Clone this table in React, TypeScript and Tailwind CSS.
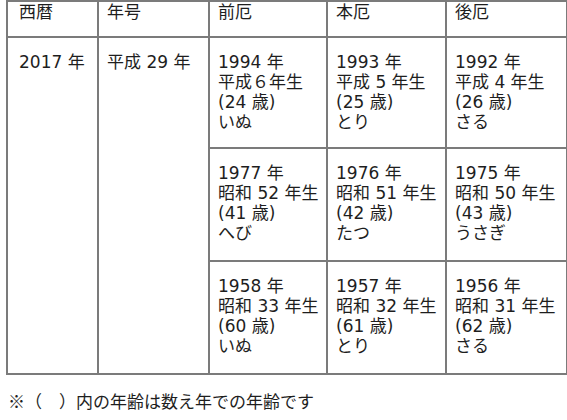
const rows = [
  [
    ['1994 年', '平成６年生', '(24 歳)', 'いぬ'],
    ['1993 年', '平成 5 年生', '(25 歳)', 'とり'],
    ['1992 年', '平成 4 年生', '(26 歳)', 'さる'],
  ],
  [
    ['1977 年', '昭和 52 年生', '(41 歳)', 'へび'],
    ['1976 年', '昭和 51 年生', '(42 歳)', 'たつ'],
    ['1975 年', '昭和 50 年生', '(43 歳)', 'うさぎ'],
  ],
  [
    ['1958 年', '昭和 33 年生', '(60 歳)', 'いぬ'],
    ['1957 年', '昭和 32 年生', '(61 歳)', 'とり'],
    ['1956 年', '昭和 31 年生', '(62 歳)', 'さる'],
  ],
]

const cell = 'border-2 border-[#7b7b7b] align-top text-left font-normal'

export default function App() {
  return (
    <div className="bg-white min-h-[420px] text-[#1e1e1e] text-[17px] leading-[20px]" style={{ fontFamily: '"DejaVu Sans", "Noto Sans CJK JP", sans-serif' }}>
      <table className="ml-[6px] w-[560px] border-collapse table-fixed">
        <colgroup>
          <col className="w-[91px]" />
          <col className="w-[111px]" />
          <col className="w-[118px]" />
          <col className="w-[119px]" />
          <col className="w-[121px]" />
        </colgroup>
        <thead>
          <tr className="h-[36px]">
            <th className={`${cell} pl-[11px] align-middle`}>西暦</th>
            <th className={`${cell} pl-[8px] align-middle`}>年号</th>
            <th className={`${cell} pl-[8px] align-middle`}>前厄</th>
            <th className={`${cell} pl-[8px] align-middle`}>本厄</th>
            <th className={`${cell} pl-[8px] align-middle`}>後厄</th>
          </tr>
        </thead>
        <tbody>
          {rows.map((row, i) => (
            <tr key={i} className={i === 0 ? 'h-[111px]' : 'h-[113px]'}>
              {i === 0 && (
                <>
                  <td rowSpan={3} className={`${cell} pl-[11px] pt-[14px]`}>2017 年</td>
                  <td rowSpan={3} className={`${cell} pl-[8px] pt-[14px]`}>平成 29 年</td>
                </>
              )}
              {row.map((lines, j) => (
                <td key={j} className={`${cell} pl-[8px] pt-[14px]`}>
                  {lines.map(l => <div key={l}>{l}</div>)}
                </td>
              ))}
            </tr>
          ))}
        </tbody>
      </table>
      <p className="mt-[16px] pl-[8px]" style={{ fontFamily: '"Noto Sans CJK JP", sans-serif' }}>※（　）内の年齢は数え年での年齢です</p>
    </div>
  )
}
